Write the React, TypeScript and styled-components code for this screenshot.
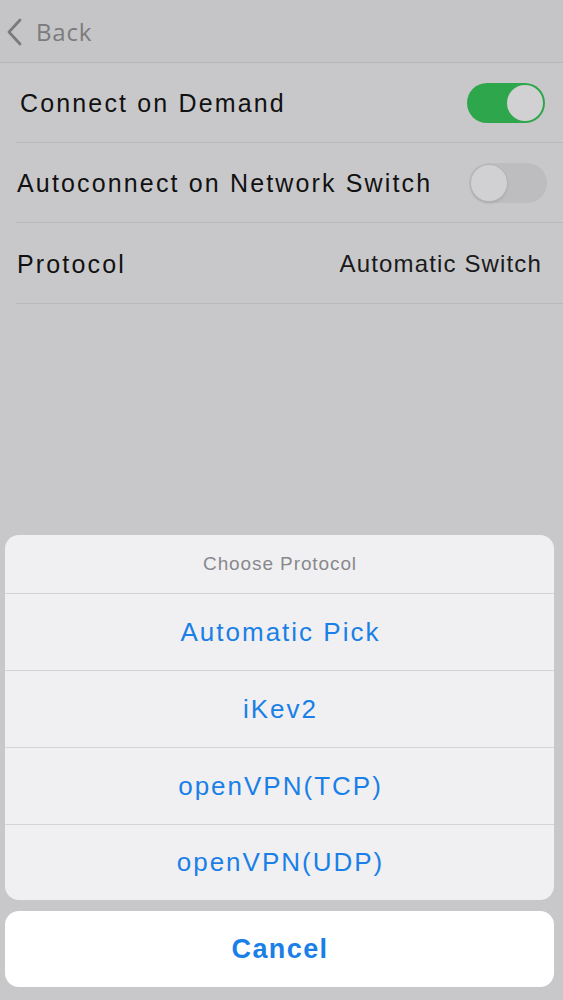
import { createGlobalStyle, styled } from "styled-components";

const GlobalStyle = createGlobalStyle`
  html, body {
    margin: 0;
    padding: 0;
    background: #c8c8ca;
  }
  body {
    font-family: "Liberation Sans", Arial, sans-serif;
  }
`;

type RowProps = {
  label: string;
  indent?: number;
  children?: React.ReactNode;
};

function SettingRow({ label, indent = 17, children }: RowProps) {
  return (
    <StyledRow>
      <StyledRowLabel $indent={indent}>{label}</StyledRowLabel>
      {children}
    </StyledRow>
  );
}

function Toggle({ on }: { on: boolean }) {
  return (
    <StyledToggle $on={on}>
      <StyledKnob $on={on} />
    </StyledToggle>
  );
}

const protocols = ["Automatic Pick", "iKev2", "openVPN(TCP)", "openVPN(UDP)"];

export default function App() {
  return (
    <>
      <GlobalStyle />
      <StyledPage>
        <StyledNavBar>
          <StyledBack>
            <svg width="18" height="28" viewBox="0 0 18 28">
              <path
                d="M15 2 L4 14 L15 26"
                fill="none"
                stroke="#7b7b7e"
                strokeWidth="2.8"
                strokeLinecap="round"
                strokeLinejoin="round"
              />
            </svg>
            <span>Back</span>
          </StyledBack>
        </StyledNavBar>

        <StyledList>
          <SettingRow label="Connect on Demand" indent={20}>
            <Toggle on />
          </SettingRow>
          <SettingRow label="Autoconnect on Network Switch">
            <Toggle on={false} />
          </SettingRow>
          <SettingRow label="Protocol">
            <StyledValue>Automatic Switch</StyledValue>
          </SettingRow>
        </StyledList>

        <StyledSpacer />

        <StyledSheet>
          <StyledSheetTitle>Choose Protocol</StyledSheetTitle>
          {protocols.map((p) => (
            <StyledSheetItem key={p}>{p}</StyledSheetItem>
          ))}
        </StyledSheet>
        <StyledCancel>Cancel</StyledCancel>
      </StyledPage>
    </>
  );
}

const StyledPage = styled.div`
  height: 1000px;
  display: flex;
  flex-direction: column;
  background: #c8c8ca;
  overflow: hidden;
`;

const StyledNavBar = styled.header`
  height: 63px;
  display: flex;
  align-items: center;
  padding-left: 5px;
  background: #c5c5c7;
  border-bottom: 1px solid #b5b5b8;
  box-sizing: border-box;
`;

const StyledBack = styled.div`
  display: flex;
  align-items: center;
  gap: 13px;
  margin-top: 1px;
  color: #7b7b7e;
  font-size: 24px;
  letter-spacing: 0.8px;
  font-family: "Open Sans", "Liberation Sans", sans-serif;
`;

const StyledList = styled.div`
  display: flex;
  flex-direction: column;
  padding-left: 16px;
`;

const StyledRow = styled.div`
  height: 80px;
  display: flex;
  align-items: center;
  justify-content: space-between;
  padding-right: 17px;
  border-bottom: 1px solid #b9b9bc;
  box-sizing: border-box;

  &:last-child {
    height: 81px;
  }
`;

const StyledRowLabel = styled.span<{ $indent: number }>`
  margin-left: ${({ $indent }) => $indent - 16}px;
  margin-top: 2px;
  font-size: 25px;
  letter-spacing: 2.15px;
  color: #111;
`;

const StyledValue = styled.span`
  font-size: 24px;
  letter-spacing: 1.15px;
  color: #1a1a1a;
  margin-right: 4px;
  margin-top: 2px;
`;

const StyledToggle = styled.div<{ $on: boolean }>`
  width: 78px;
  height: 40px;
  border-radius: 20px;
  box-sizing: border-box;
  padding: 2px;
  display: flex;
  justify-content: ${({ $on }) => ($on ? "flex-end" : "flex-start")};
  background: ${({ $on }) => ($on ? "#2ea64b" : "#bdbdc0")};
  margin-right: ${({ $on }) => ($on ? "1px" : "-1px")};
`;

const StyledKnob = styled.div<{ $on: boolean }>`
  width: 36px;
  height: 36px;
  border-radius: 50%;
  background: #d1d1d3;
  box-shadow: ${({ $on }) =>
    $on ? "none" : "0 0 0 1px #b4b4b6, 0 2px 3px rgba(0,0,0,0.12)"};
`;

const StyledSpacer = styled.div`
  flex: 1;
`;

const StyledSheet = styled.div`
  margin: 0 9px 0 5px;
  background: #f0f0f2;
  border-radius: 14px;
  display: flex;
  flex-direction: column;
  overflow: hidden;
`;

const StyledSheetTitle = styled.div`
  height: 59px;
  display: flex;
  align-items: center;
  justify-content: center;
  padding-left: 1px;
  font-size: 19px;
  letter-spacing: 0.9px;
  color: #88888c;
  border-bottom: 1px solid #d4d4d7;
  box-sizing: border-box;
`;

const StyledSheetItem = styled.div`
  height: 77px;
  display: flex;
  align-items: center;
  justify-content: center;
  padding-left: 2px;
  font-size: 26px;
  letter-spacing: 2px;
  color: #1a7fe6;
  border-bottom: 1px solid #d4d4d7;
  box-sizing: border-box;

  &:last-child {
    border-bottom: none;
    height: 75px;
  }
`;

const StyledCancel = styled.div`
  margin: 11px 9px 13px 5px;
  height: 76px;
  display: flex;
  align-items: center;
  justify-content: center;
  padding-left: 1px;
  background: #ffffff;
  border-radius: 14px;
  font-size: 27px;
  font-weight: 700;
  letter-spacing: 1.4px;
  color: #1a7fe6;
`;
